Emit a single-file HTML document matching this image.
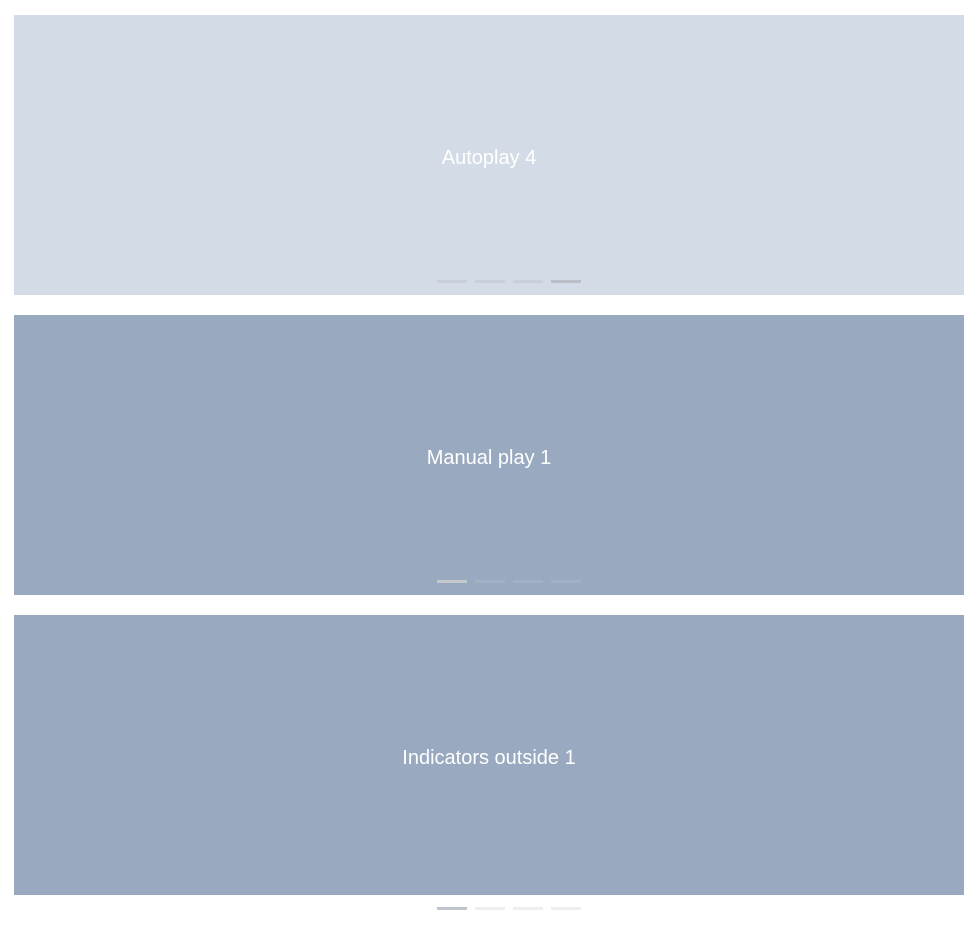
<!DOCTYPE html>
<html><head><style>
body{margin:0;background:#fff;width:978px;height:927px;position:relative;font-family:"Liberation Sans","Noto Sans CJK SC",sans-serif;overflow:hidden}
.p{position:absolute;left:14px;width:950px;height:280px;color:#fff;font-size:20px;display:flex;align-items:center;justify-content:center;box-sizing:border-box;padding-top:6px}
.ind{position:absolute;left:437px;display:flex;gap:8px}
.ind i{display:block;width:30px;height:3px}
</style></head><body>
<div class="p" style="top:15px;background:#d3dce6">Autoplay 4</div>
<div class="ind" style="top:280px"><i style="background:#c9d0da"></i><i style="background:#c9d0da"></i><i style="background:#c9d0da"></i><i style="background:#b9bec7"></i></div>
<div class="p" style="top:315px;background:#99a9bf">Manual play 1</div>
<div class="ind" style="top:580px"><i style="background:#c3c8cf"></i><i style="background:#a3b1c4"></i><i style="background:#a3b1c4"></i><i style="background:#a3b1c4"></i></div>
<div class="p" style="top:615px;background:#99a9bf">Indicators outside 1</div>
<div class="ind" style="top:907px"><i style="background:#c0c4cc"></i><i style="background:#eeeeee"></i><i style="background:#eeeeee"></i><i style="background:#eeeeee"></i></div>
</body></html>
